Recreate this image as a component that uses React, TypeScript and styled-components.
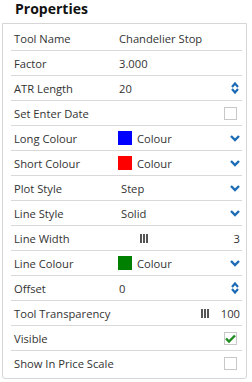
import React from 'react';
import styled, { createGlobalStyle } from 'styled-components';

const GlobalStyle = createGlobalStyle`
  body {
    margin: 0;
    background: #ffffff;
    font-family: "Open Sans", "Liberation Sans", sans-serif;
    color: #333333;
  }
`;

const Page = styled.div`
  width: 252px;
  padding: 0 5px 0 2px;
  box-sizing: border-box;
`;

const Title = styled.h1`
  margin: 0;
  padding: 0 0 0 13px;
  height: 23px;
  line-height: 17px;
  font-size: 14px;
  font-weight: 700;
  color: #111111;
`;

const Panel = styled.div`
  border: 1px solid #d6d6d6;
  border-radius: 0 0 3px 3px;
  padding: 2px 4px 2px 8px;
`;

const Row = styled.div<{ $last?: boolean }>`
  display: grid;
  grid-template-columns: 104px 1fr auto;
  align-items: center;
  height: 25px;
  box-sizing: border-box;
  border-bottom: ${(p) => (p.$last ? 'none' : '1px solid #d9d9d9')};
  padding: 0 2px 0 3px;
  font-size: 11.2px;
`;

const Label = styled.span`
  color: #333333;
  white-space: nowrap;
`;

const Value = styled.span<{ $indent?: number }>`
  display: flex;
  align-items: center;
  gap: 5px;
  padding-left: ${(p) => p.$indent ?? 0}px;
  white-space: nowrap;
`;

const Swatch = styled.span<{ $color: string }>`
  width: 14px;
  height: 14px;
  background: ${(p) => p.$color};
`;

const Right = styled.span`
  display: flex;
  align-items: center;
  justify-content: flex-end;
  gap: 12px;
`;

const Checkbox = styled.span`
  width: 11px;
  height: 11px;
  margin-right: 3px;
  border: 1px solid #c8c8c8;
  display: flex;
  align-items: center;
  justify-content: center;
`;

const Bars = styled.span`
  display: flex;
  gap: 1px;
  & > i {
    width: 2px;
    height: 9px;
    background: #555555;
  }
`;

const Chevron = () => (
  <svg width="10" height="8" viewBox="0 0 10 8">
    <path d="M1 2 L5 6 L9 2" fill="none" stroke="#1b6bb5" strokeWidth="2.4" />
  </svg>
);

const Spinner = () => (
  <svg width="8" height="12" viewBox="0 0 8 12" style={{ marginRight: 1 }}>
    <path d="M1 5 L4 1.5 L7 5" fill="none" stroke="#1b6bb5" strokeWidth="2.2" />
    <path d="M1 7 L4 10.5 L7 7" fill="none" stroke="#1b6bb5" strokeWidth="2.2" />
  </svg>
);

const Tick = () => (
  <svg width="11" height="9" viewBox="0 0 11 9">
    <path d="M1 4.5 L4 7.5 L10 1.5" fill="none" stroke="#1e8c1e" strokeWidth="2.4" />
  </svg>
);

const SliderBars = () => (
  <Bars>
    <i />
    <i />
    <i />
  </Bars>
);

const App: React.FC = () => {
  return (
    <Page>
      <GlobalStyle />
      <Title>Properties</Title>
      <Panel>
        <Row>
          <Label>Tool Name</Label>
          <Value $indent={1}>Chandelier Stop</Value>
          <span />
        </Row>
        <Row>
          <Label>Factor</Label>
          <Value $indent={1}>3.000</Value>
          <span />
        </Row>
        <Row>
          <Label>ATR Length</Label>
          <Value $indent={1}>20</Value>
          <Right><Spinner /></Right>
        </Row>
        <Row>
          <Label>Set Enter Date</Label>
          <Value />
          <Right><Checkbox /></Right>
        </Row>
        <Row>
          <Label>Long Colour</Label>
          <Value><Swatch $color="#0000ff" />Colour</Value>
          <Right><Chevron /></Right>
        </Row>
        <Row>
          <Label>Short Colour</Label>
          <Value><Swatch $color="#ff0000" />Colour</Value>
          <Right><Chevron /></Right>
        </Row>
        <Row>
          <Label>Plot Style</Label>
          <Value $indent={3}>Step</Value>
          <Right><Chevron /></Right>
        </Row>
        <Row>
          <Label>Line Style</Label>
          <Value $indent={3}>Solid</Value>
          <Right><Chevron /></Right>
        </Row>
        <Row>
          <Label>Line Width</Label>
          <Value $indent={22}><SliderBars /></Value>
          <Right>3</Right>
        </Row>
        <Row>
          <Label>Line Colour</Label>
          <Value><Swatch $color="#008000" />Colour</Value>
          <Right><Chevron /></Right>
        </Row>
        <Row>
          <Label>Offset</Label>
          <Value $indent={1}>0</Value>
          <Right><Spinner /></Right>
        </Row>
        <Row>
          <Label>Tool Transparency</Label>
          <Value />
          <Right><SliderBars />100</Right>
        </Row>
        <Row>
          <Label>Visible</Label>
          <Value />
          <Right><Checkbox><Tick /></Checkbox></Right>
        </Row>
        <Row $last>
          <Label>Show In Price Scale</Label>
          <Value />
          <Right><Checkbox /></Right>
        </Row>
      </Panel>
    </Page>
  );
};

export default App;
